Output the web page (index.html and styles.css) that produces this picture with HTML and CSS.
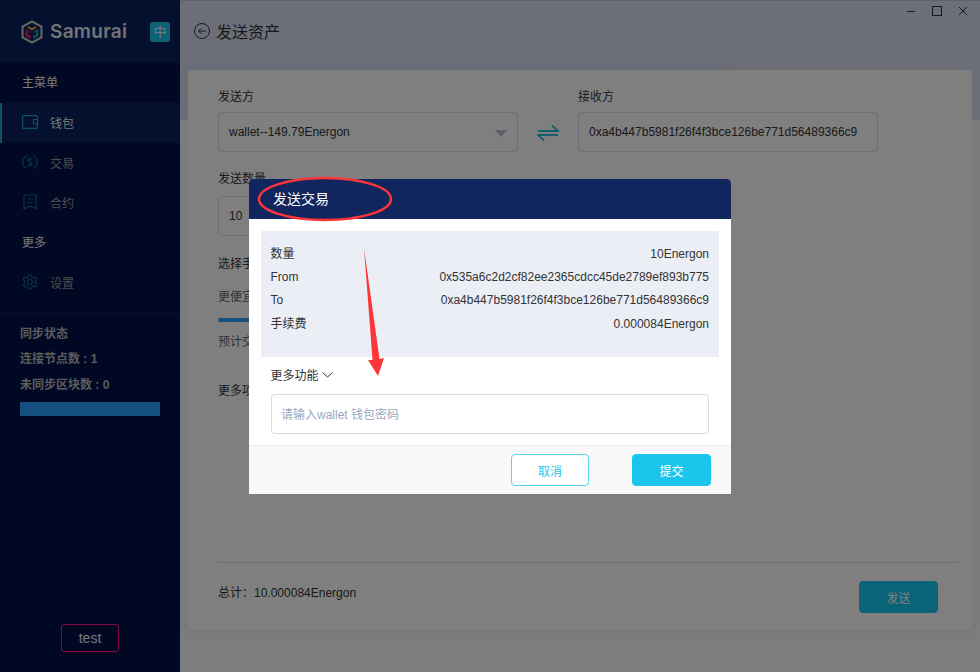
FILE: index.html
```html
<!DOCTYPE html>
<html lang="zh-CN">
<head>
  <meta charset="UTF-8">
  <title>发送资产</title>
  <link rel="stylesheet" href="styles.css">
</head>
<body>
<div class="app">

  <aside class="sidebar">
    <div class="brand">
      <svg class="logo" width="22" height="24" viewBox="0 0 22 24">
        <path d="M11 1.5 20.5 6.5V17.5L11 22.500 1.500 17.500V6.500Z" fill="none" stroke="#d0d0d4" stroke-width="2"/>
        <path d="M6 7.500 8 6.500 11 8 14 6.500 16 7.500 11 10.500Z" fill="#f2b01e"/>
        <path d="M4.500 9 10 12V19L4.500 16Z" fill="#e0245e"/>
        <path d="M17.500 9 12 12V19L17.500 16Z" fill="#18a0b8"/>
        <path d="M7 11.500 10 13V16L7 14.500Z" fill="#0a205e"/>
        <path d="M15 11.500 12 13V16L15 14.500Z" fill="#0a205e"/>
      </svg>
      <span class="brand-name">Samurai</span>
      <span class="lang">中</span>
    </div>

    <div class="menu-title">主菜单</div>
    <a class="menu-item active">
      <svg width="16" height="14" viewBox="0 0 16 14" fill="none" stroke="#1fa6c4" stroke-width="1.200"><rect x=".6" y=".6" width="14.800" height="12.800" rx="1"/><path d="M15 4.500H11.500V9H15"/></svg>
      钱包
    </a>
    <a class="menu-item">
      <svg width="16" height="16" viewBox="0 0 16 16" fill="none" stroke="#146a80" stroke-width="1.200"><path d="M5 1.500A7 7 0 0 0 5 14.300M11 1.700A7 7 0 0 1 11 14.500"/><path d="M10 5.800C10 4.800 9 4.500 8 4.500S6 5 6 6.200 7 7.700 8 8 10 8.800 10 10 9 11.500 8 11.500 6 11 6 10M8 3.500V12.500"/></svg>
      交易
    </a>
    <a class="menu-item">
      <svg width="16" height="16" viewBox="0 0 16 16" fill="none" stroke="#146a80" stroke-width="1.200"><path d="M2 1H14V15L8 12 2 15Z"/><path d="M5 5H11M5 8.500H11"/></svg>
      合约
    </a>
    <div class="menu-title">更多</div>
    <a class="menu-item">
      <svg width="16" height="16" viewBox="0 0 16 16" fill="none" stroke="#146a80" stroke-width="1.100"><circle cx="8" cy="8" r="2.500"/><path d="M6.800 1H9.200L9.700 3 11.500 3.900 13.400 3 14.800 5 13.500 6.500V9.500L14.800 11 13.400 13 11.500 12.100 9.700 13 9.200 15H6.800L6.300 13 4.500 12.100 2.600 13 1.200 11 2.500 9.500V6.500L1.200 5 2.600 3 4.500 3.900 6.300 3Z"/></svg>
      设置
    </a>

    <div class="sync">
      <div class="sync-line">同步状态</div>
      <div class="sync-line">连接节点数 : 1</div>
      <div class="sync-line">未同步区块数 : 0</div>
      <div class="sync-bar"></div>
    </div>

    <div class="account"><span class="account-name">test</span></div>
  </aside>

  <main class="main">
    <header class="page-head">
      <svg width="16" height="16" viewBox="0 0 16 16" fill="none" stroke="#333" stroke-width="1"><circle cx="8" cy="8" r="7.500"/><path d="M12 8H4.500M7.500 5 4.500 8 7.500 11"/></svg>
      <h1 class="page-title">发送资产</h1>
    </header>

    <section class="card">
      <div class="address-row">
        <div class="field">
          <label class="field-label">发送方</label>
          <div class="box select-box">wallet--149.79Energon<span class="caret"></span></div>
        </div>
        <svg class="swap" width="22" height="18" viewBox="0 0 22 18" fill="none" stroke="#2bbcd8" stroke-width="1.800"><path d="M1 7H21L15 1.500M21 11H1L7 16.500"/></svg>
        <div class="field">
          <label class="field-label">接收方</label>
          <div class="box">0xa4b447b5981f26f4f3bce126be771d56489366c9</div>
        </div>
      </div>

      <div class="field amount">
        <label class="field-label">发送数量</label>
        <div class="box">10</div>
      </div>

      <div class="fee-title">选择手续费</div>
      <div class="fee-cheap">更便宜</div>
      <div class="fee-bar"></div>
      <div class="fee-time">预计交易时间</div>
      <div class="fee-more">更多项</div>

      <footer class="card-foot">
        <span class="total">总计：10.000084Energon</span>
        <button class="btn btn-send">发送</button>
      </footer>
    </section>
  </main>

  <div class="win-controls">
    <svg width="10" height="10" viewBox="0 0 10 10" stroke="#333" fill="none"><path d="M1 5.500H9"/></svg>
    <svg width="10" height="10" viewBox="0 0 10 10" stroke="#333" fill="none"><rect x=".5" y=".5" width="9" height="9"/></svg>
    <svg width="10" height="10" viewBox="0 0 10 10" stroke="#333" fill="none"><path d="M1 1 9 9M9 1 1 9"/></svg>
  </div>

  <div class="overlay"></div>

  <div class="modal">
    <div class="modal-head">发送交易</div>
    <div class="modal-body">
      <dl class="info">
        <div class="info-row"><dt>数量</dt><dd>10Energon</dd></div>
        <div class="info-row"><dt>From</dt><dd>0x535a6c2d2cf82ee2365cdcc45de2789ef893b775</dd></div>
        <div class="info-row"><dt>To</dt><dd>0xa4b447b5981f26f4f3bce126be771d56489366c9</dd></div>
        <div class="info-row"><dt>手续费</dt><dd>0.000084Energon</dd></div>
      </dl>
      <div class="more">更多功能
        <svg width="11" height="6" viewBox="0 0 11 6" fill="none" stroke="#333"><path d="M.5 .5 5.500 5 10.500 .5"/></svg>
      </div>
      <input class="password" type="password" placeholder="请输入wallet 钱包密码">
    </div>
    <div class="modal-foot">
      <button class="btn btn-cancel">取消</button>
      <button class="btn btn-submit">提交</button>
    </div>
  </div>

  <svg class="marks" width="980" height="672" viewBox="0 0 980 672">
    <ellipse cx="325" cy="199" rx="66" ry="21" fill="none" stroke="#fb3538" stroke-width="2.500"/>
    <path d="M364 248 379.500 359 384 358 378 376 368 360 372.500 360Z" fill="#fb3538"/>
  </svg>

</div>
</body>
</html>
```

FILE: styles.css
```css
* {
  box-sizing: border-box;
}
body {
  margin: 0;
  font-family: "Liberation Sans", "Noto Sans CJK SC", sans-serif;
  font-size: 12px;
  color: #333;
}
.app {
  position: relative;
  display: flex;
  width: 980px;
  height: 672px;
  overflow: hidden;
}

/* sidebar */
.sidebar {
  display: flex;
  flex-direction: column;
  width: 180px;
  flex-shrink: 0;
  background: #001048;
  color: #999;
}
.brand {
  display: flex;
  align-items: center;
  height: 63px;
  padding: 0 10px 0 21px;
  background: #0a205e;
}
.brand-name {
  margin-left: 7px;
  font-family: Inter, "Liberation Sans", sans-serif;
  font-size: 19px;
  font-weight: 600;
  letter-spacing: .3px;
  color: #fff;
  opacity: .9;
}
.lang {
  width: 20px;
  height: 20px;
  margin-left: auto;
  border-radius: 3px;
  background: #1bc5ec;
  color: #eee;
  font-size: 13px;
  line-height: 20px;
  text-align: center;
}
.menu-title {
  height: 40px;
  padding-left: 22px;
  line-height: 40px;
  color: #f4f4f4;
}
.menu-item {
  display: flex;
  align-items: center;
  gap: 12px;
  height: 40px;
  padding: 0 0 2px 22px;
}
.menu-item.active {
  padding-left: 20px;
  border-left: 2px solid #1fa6c4;
  background: #0a205e;
  color: #eee;
}
.sync {
  margin-top: 10px;
  padding: 10px 20px 0;
  border-top: 1px solid #0a205e;
  font-weight: 700;
  color: #b8b8b8;
}
.sync-line {
  height: 25px;
  line-height: 20px;
}
.sync-line + .sync-line + .sync-line {
  line-height: 22px;
}
.sync-bar {
  height: 14px;
  margin-top: 3px;
  background: #279fff;
}
.account {
  margin-top: auto;
  padding-bottom: 20px;
  text-align: center;
}
.account-name {
  display: inline-block;
  width: 58px;
  height: 28px;
  border: 1px solid #ff1480;
  border-radius: 3px;
  font-size: 14px;
  line-height: 26px;
  color: #eee;
}

/* main column */
.main {
  flex: 1;
  padding: 0 8px;
  background:
    linear-gradient(172deg, transparent 62%, rgba(255, 255, 255, .08) 62%) 0 0 / 100% 120px no-repeat,
    linear-gradient(#c4c7d4 1px, #d8dcf0 1px 120px, #f9fafe 120px);
}
.page-head {
  display: flex;
  align-items: center;
  gap: 6px;
  height: 70px;
  padding: 0 0 8px 6px;
}
.page-title {
  margin: 0;
  font-size: 16px;
  font-weight: 400;
}
.card {
  height: 560px;
  padding: 0 14px 0 30px;
  border-radius: 4px;
  background: #fff;
  box-shadow: 0 2px 10px rgba(100, 110, 140, .1);
}
.address-row {
  display: flex;
  align-items: flex-end;
  padding-top: 19px;
}
.field-label {
  display: block;
  height: 23px;
  line-height: 16px;
}
.box {
  position: relative;
  width: 300px;
  height: 40px;
  padding: 0 10px;
  border: 1px solid #d7e0f0;
  border-radius: 4px;
  line-height: 38px;
}
.caret {
  position: absolute;
  right: 10px;
  top: 17px;
  border: 6px solid transparent;
  border-top: 7px solid #b4bfd0;
  border-bottom: 0;
}
.swap {
  margin: 0 19px 10px;
}
.amount {
  margin-top: 19px;
}
.amount .field-label {
  height: 25px;
}
.fee-title {
  margin-top: 20px;
  line-height: 16px;
}
.fee-cheap {
  margin-top: 17px;
  line-height: 16px;
  color: #666;
}
.fee-bar {
  width: 300px;
  height: 4px;
  margin-top: 13px;
  border-radius: 2px;
  background: #279fff;
}
.fee-time {
  margin-top: 12px;
  line-height: 16px;
  color: #666;
}
.fee-more {
  margin-top: 33px;
  line-height: 16px;
}
.card-foot {
  display: flex;
  align-items: flex-start;
  justify-content: space-between;
  margin-top: 163px;
  padding: 18px 20px 0 0;
  border-top: 1px solid #d7d9e4;
}
.total {
  line-height: 24px;
}
.btn {
  height: 32px;
  padding: 0;
  border: 1px solid #1bc5ec;
  border-radius: 4px;
  font-family: inherit;
  font-size: 12px;
  cursor: pointer;
}
.btn-send {
  width: 79px;
  background: #17c6ee;
  color: #fff;
}

.win-controls {
  position: absolute;
  top: 6px;
  right: 12px;
  display: flex;
  gap: 16px;
}

.overlay {
  position: absolute;
  inset: 0;
  background: rgba(0, 0, 0, .5);
}

/* confirm dialog */
.modal {
  position: absolute;
  left: 249px;
  top: 179px;
  width: 482px;
  height: 315px;
  display: flex;
  flex-direction: column;
  border-radius: 4px 4px 0 0;
  background: #fff;
}
.modal-head {
  height: 40px;
  padding-left: 24px;
  border-radius: 4px 4px 0 0;
  background: #11255f;
  color: #fff;
  font-size: 14px;
  line-height: 40px;
}
.modal-body {
  flex: 1;
  padding: 12px 12px 0;
}
.info {
  height: 126px;
  margin: 0;
  padding: 12px 10px 0 9.500px;
  background: #ebeef5;
}
.info-row {
  display: flex;
  justify-content: space-between;
  height: 23px;
  line-height: 23px;
}
.info-row:last-child {
  margin-top: 1px;
}
.info-row dd {
  margin: 0;
}
.more {
  display: flex;
  align-items: center;
  gap: 3px;
  height: 35px;
  padding-left: 9.500px;
  margin-bottom: 2px;
}
.password {
  display: block;
  width: 438px;
  height: 40px;
  margin-left: 10px;
  padding: 2px 9px 0;
  border: 1px solid #d5dde8;
  border-radius: 4px;
  font-family: inherit;
  font-size: 12px;
}
.password::placeholder {
  color: #9aa8bf;
}
.modal-foot {
  display: flex;
  justify-content: flex-end;
  gap: 43px;
  height: 49px;
  padding: 8px 20px 0 0;
  border-top: 1px solid #eee;
  background: #f9f9f9;
}
.btn-cancel {
  width: 78px;
  background: #fff;
  color: #1bc5ec;
  border-color: #56d5ef;
}
.btn-submit {
  width: 79px;
  background: #1bc5ec;
  color: #fff;
}

.marks {
  position: absolute;
  left: 0;
  top: 0;
  pointer-events: none;
}
```
